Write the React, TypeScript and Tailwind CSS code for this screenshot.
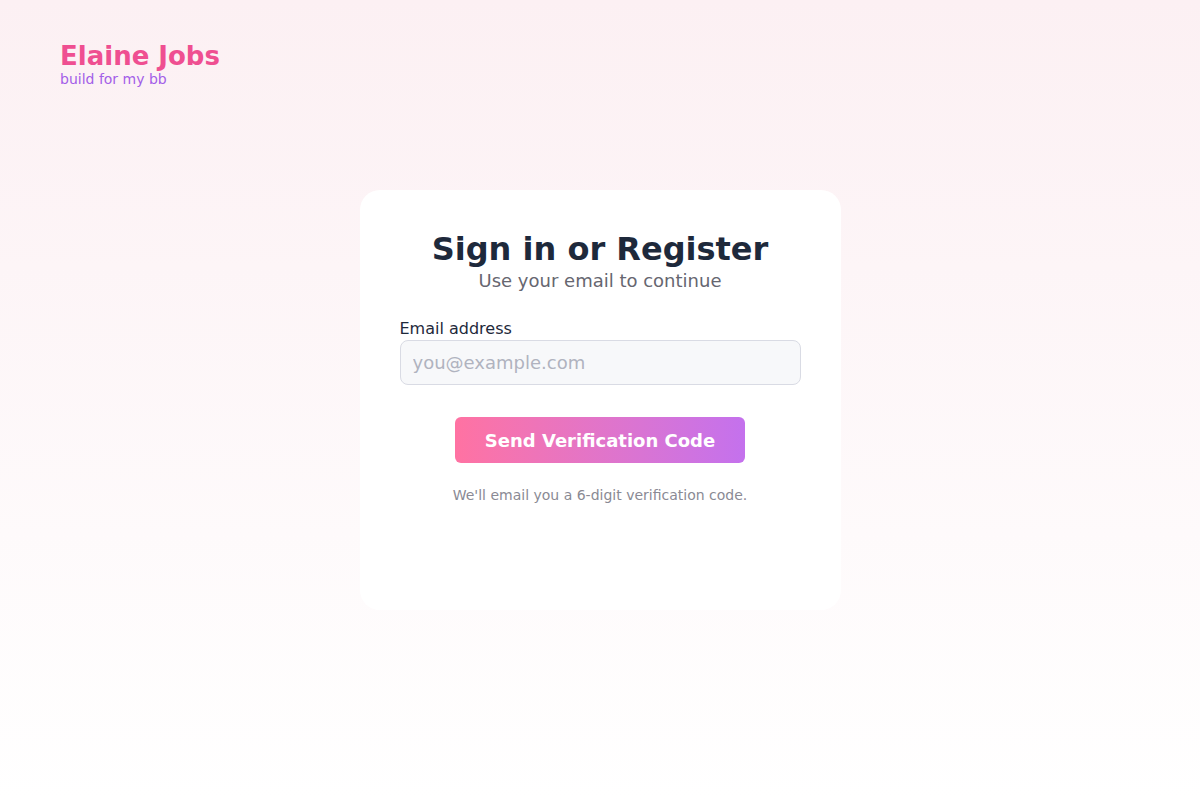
export default function App() {
  return (
    <div
      className="relative min-h-screen w-full bg-gradient-to-b from-[#fcf0f3] to-[#ffffff]"
      style={{ fontFamily: '"DejaVu Sans", sans-serif' }}
    >
      <header className="absolute left-[60px] top-[40px]">
        <h1 className="text-[26px] font-bold leading-[32px] text-[#ef4f91]">Elaine Jobs</h1>
        <p className="text-[14px] leading-[14px] text-[#a35ee8]">build for my bb</p>
      </header>

      <main className="flex min-h-screen items-center justify-center">
        <div className="h-[420px] w-[481px] rounded-[20px] bg-white px-10 pt-10">
          <div className="text-center">
            <h2 className="text-[32px] font-bold leading-[38px] text-[#1e293b]">
              Sign in or Register
            </h2>
            <p className="text-[18px] leading-[25px] text-[#666670]">Use your email to continue</p>
          </div>

          <label className="mt-6 block text-[16px] leading-[23px] text-[#1e293b]">Email address</label>
          <input
            type="email"
            placeholder="you@example.com"
            className="block h-[45px] w-full rounded-lg border border-[#d9dbe4] bg-[#f7f8fa] px-3 text-[18px] text-[#1e293b] outline-none placeholder:text-[#b0b3bf]"
          />

          <div className="mt-8 flex justify-center">
            <button className="h-[46px] w-[290px] rounded-md bg-gradient-to-r from-[#ff72a2] to-[#c471ed] text-[18px] font-bold text-white">
              Send Verification Code
            </button>
          </div>

          <p className="mt-[22px] text-center text-[14px] leading-[20px] text-[#8a8a94]">
            We'll email you a 6-digit verification code.
          </p>
        </div>
      </main>
    </div>
  );
}
